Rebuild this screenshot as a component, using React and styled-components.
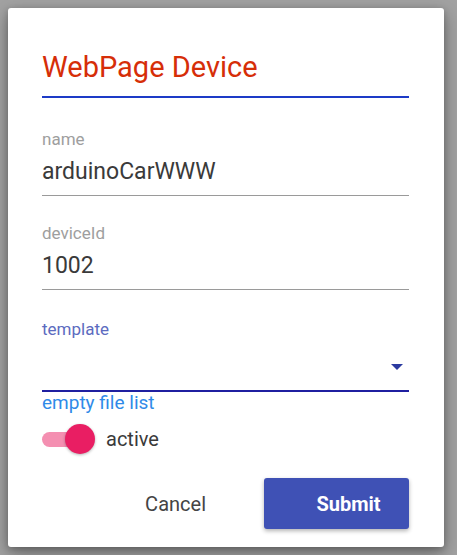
import React from "react";
import styled, { createGlobalStyle } from "styled-components";

const Global = createGlobalStyle`
  html, body { margin: 0; padding: 0; background: #a2a2a2; }
  body { font-family: Roboto, "Liberation Sans", sans-serif; }
  * { box-sizing: border-box; }
`;

const Page = styled.div`
  display: flex;
  padding: 8px 13px 8px 8px;
  height: 555px;
`;

const Card = styled.div`
  flex: 1;
  background: #fff;
  border-radius: 3px;
  box-shadow: 0 6px 18px rgba(0,0,0,0.35), 0 2px 6px rgba(0,0,0,0.2);
  padding: 43px 35px 19px 34px;
  display: flex;
  flex-direction: column;
`;

const Title = styled.h2`
  margin: 0;
  font-size: 29px;
  line-height: 32px;
  font-weight: 400;
  color: #d62e08;
  padding-bottom: 13px;
  border-bottom: 2px solid #1d3bc7;
`;

const Field = styled.div`
  display: flex;
  flex-direction: column;
  margin-top: ${p => p.$top}px;
`;

const Label = styled.label`
  font-size: 17px;
  line-height: 20px;
  color: ${p => (p.$focused ? "#5c6bc0" : "#9e9e9e")};
`;

const Value = styled.div`
  margin-top: 9px;
  font-size: 23px;
  line-height: 28px;
  color: #3a3a3a;
  padding-bottom: 9px;
  border-bottom: 1px solid #9a9a9a;
`;

const Select = styled.div`
  height: 53px;
  display: flex;
  align-items: center;
  justify-content: flex-end;
  padding: 4px 6px 0 0;
  border-bottom: 2px solid #1f1fa0;
`;

const Helper = styled.div`
  font-size: 19px;
  line-height: 22px;
  color: #2f8ae8;
`;

const SwitchRow = styled.div`
  display: flex;
  align-items: center;
  margin-top: 10px;
  height: 30px;
  gap: 11px;
`;

const Track = styled.div`
  position: relative;
  width: 53px;
  height: 30px;
  display: flex;
  align-items: center;
`;

const TrackBar = styled.div`
  width: 45px;
  height: 15px;
  border-radius: 8px;
  background: #f48fb1;
`;

const Thumb = styled.div`
  position: absolute;
  right: 0;
  top: 0;
  width: 30px;
  height: 30px;
  border-radius: 50%;
  background: #e91e63;
  box-shadow: 0 1px 3px rgba(0,0,0,0.3);
`;

const SwitchLabel = styled.span`
  font-size: 20px;
  color: #3a3a3a;
`;

const Actions = styled.div`
  display: flex;
  justify-content: flex-end;
  align-items: center;
  margin-top: 24px;
`;

const TextButton = styled.button`
  border: none;
  background: none;
  font-family: inherit;
  font-size: 20px;
  color: #444;
  padding: 0 16px;
  margin-right: 42px;
  height: 51px;
`;

const PrimaryButton = styled.button`
  border: none;
  width: 145px;
  height: 51px;
  border-radius: 3px;
  background: #3f51b5;
  color: #fff;
  font-family: inherit;
  font-size: 20px;
  font-weight: 700;
  padding: 0 0 0 24px;
  box-shadow: 0 2px 4px rgba(0,0,0,0.3);
`;

export default function App() {
  return (
    <>
      <Global />
      <Page>
        <Card>
          <Title>WebPage Device</Title>
          <Field $top={31}>
            <Label>name</Label>
            <Value>arduinoCarWWW</Value>
          </Field>
          <Field $top={27}>
            <Label>deviceId</Label>
            <Value>1002</Value>
          </Field>
          <Field $top={29}>
            <Label $focused>template</Label>
            <Select>
              <svg width="12" height="6" viewBox="0 0 12 6">
                <path d="M0 0 L12 0 L6 6 Z" fill="#2b3aa0" />
              </svg>
            </Select>
            <Helper>empty file list</Helper>
          </Field>
          <SwitchRow>
            <Track>
              <TrackBar />
              <Thumb />
            </Track>
            <SwitchLabel>active</SwitchLabel>
          </SwitchRow>
          <Actions>
            <TextButton>Cancel</TextButton>
            <PrimaryButton>Submit</PrimaryButton>
          </Actions>
        </Card>
      </Page>
    </>
  );
}
